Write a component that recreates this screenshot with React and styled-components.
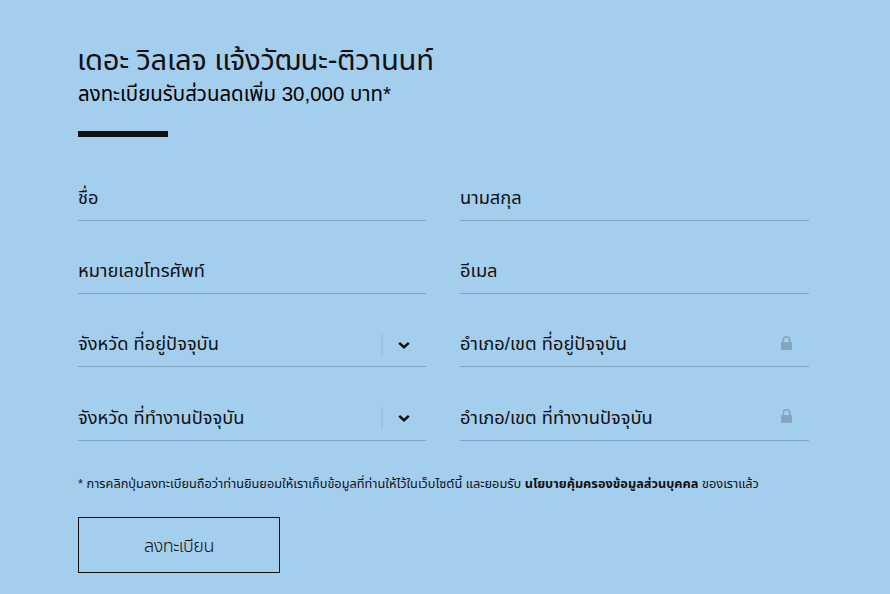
import React from "react";
import styled, { createGlobalStyle } from "styled-components";
const GlobalStyle=createGlobalStyle`
*{
    box-sizing:border-box;
}
body{
    margin:0;
    background:#a4ceee;
    color:#111;
    font-family:"Liberation Sans","Noto Sans Thai","Noto Sans",sans-serif;
}
`;
const Container=styled.main`
display:flex;
flex-direction:column;
align-items:flex-start;
width:890px;
height:594px;
padding:40px 81px 0 78px;
overflow:hidden;
`;
const Title=styled.h1`
margin:0 0 0 -1px;
font-size:29.2px;
font-weight:400;
line-height:40px;
letter-spacing:-0.3px;
white-space:nowrap;
`;
const Subtitle=styled.h2`
margin:0;
font-size:20.45px;
font-weight:400;
line-height:28px;
color:#000;
white-space:nowrap;
`;
const Divider=styled.div`
width:90px;
height:6px;
margin-top:23px;
background:#111;
`;
const FieldGrid=styled.form`
display:grid;
grid-template-columns:348px 349px;
grid-template-rows:73px 73px 73px 74px;
column-gap:34px;
margin-top:11px;
`;
const Field=styled.div`
display:flex;
align-items:flex-end;
justify-content:space-between;
border-bottom:1px solid #82a4be;
`;
const Label=styled.label`
font-size:18.3px;
line-height:26px;
padding-bottom:9px;
white-space:nowrap;
`;
const IconBox=styled.span`
display:flex;
padding-bottom:${props=>props.$raised?"1px":"0"};
`;
const SelectIcon=styled.span`
display:flex;
align-items:center;
width:45px;
height:22px;
margin-bottom:10px;
padding-left:15px;
border-left:2px solid #9bc3e2;
`;
const LockIcon=styled.svg`
width:11px;
height:14px;
margin:0 17px 16px 0;
`;
const Note=styled.p`
margin:31px 0 0;
font-size:12.75px;
line-height:24px;
white-space:nowrap;
`;
const SubmitButton=styled.button`
width:202px;
height:56px;
margin-top:21px;
padding:2px 0 0;
border:1px solid #111;
background:transparent;
color:#111;
font-family:inherit;
font-size:18px;
font-weight:300;
letter-spacing:-0.5px;
`;
const fields=[
    {label:"ชื่อ"},
    {label:"นามสกุล"},
    {label:"หมายเลขโทรศัพท์"},
    {label:"อีเมล"},
    {label:"จังหวัด ที่อยู่ปัจจุบัน",icon:"select"},
    {label:"อำเภอ/เขต ที่อยู่ปัจจุบัน",icon:"lock"},
    {label:"จังหวัด ที่ทำงานปัจจุบัน",icon:"select",raised:true},
    {label:"อำเภอ/เขต ที่ทำงานปัจจุบัน",icon:"lock",raised:true},
];
const Arrow=()=>(
    <SelectIcon>
        <svg width="12" height="8" viewBox="0 0 12 8" fill="none" stroke="#111" strokeWidth="2.5">
            <path d="M1.2 1.8L6 6.2L10.8 1.8"/>
        </svg>
    </SelectIcon>
)
const Lock=()=>(
    <LockIcon viewBox="0 0 11 14">
        <path d="M2.3 7V4a3.2 3.2 0 0 1 6.4 0v3" fill="none" stroke="#83a5bf" strokeWidth="1.6"/>
        <rect y="6" width="11" height="8" rx="1" fill="#83a5bf"/>
    </LockIcon>
)
const App=()=>{
    return(
        <Container>
            <GlobalStyle/>
            <Title>เดอะ วิลเลจ แจ้งวัฒนะ-ติวานนท์</Title>
            <Subtitle>ลงทะเบียนรับส่วนลดเพิ่ม 30,000 บาท*</Subtitle>
            <Divider/>
            <FieldGrid>
                {fields.map(field=>(
                    <Field key={field.label}>
                        <Label>{field.label}</Label>
                        {field.icon && <IconBox $raised={field.raised}>
                            {field.icon==="select"?<Arrow/>:<Lock/>}
                        </IconBox>}
                    </Field>
                ))}
            </FieldGrid>
            <Note>* การคลิกปุ่มลงทะเบียนถือว่าท่านยินยอมให้เราเก็บข้อมูลที่ท่านให้ไว้ในเว็บไซต์นี้ และยอมรับ <b>นโยบายคุ้มครองข้อมูลส่วนบุคคล</b> ของเราแล้ว</Note>
            <SubmitButton type="button">ลงทะเบียน</SubmitButton>
        </Container>
    )
}
export default App;
